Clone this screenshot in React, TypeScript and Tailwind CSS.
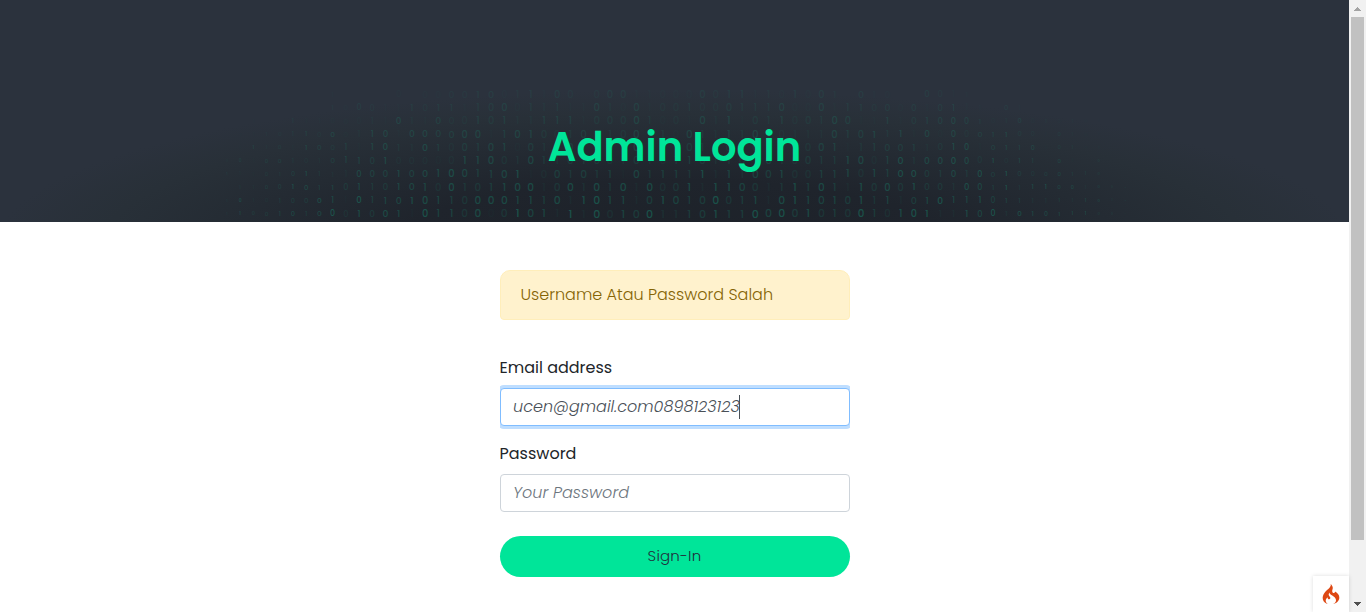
import React from "react";
import { SiCodeigniter } from "react-icons/si";

const BITS: [string, string][] = [
  ["00110101101010100" + "0010011100000011" + "00000111101001101" + "0000011010101010101",
   "00000000100001011" + "2233123132023311" + "11132331213132031" + "1003211000000000000"],
  ["01101011100011101" + "1110001111101001" + "00100011100001110" + "0001011100101010101",
   "00000000213211323" + "3133413231142141" + "22322333341141332" + "3131341103100000000"],
  ["01101111000110110" + "0010111111100001" + "00101110110010011" + "1101000101001010101",
   "00100311111215214" + "2243422444133353" + "12152513342335411" + "4134454312412121100"],
  ["01110110001101000" + "0001101001011001" + "10011110101110101" + "1110000011001010101",
   "01122342512551554" + "4551455323423352" + "31532535222225445" + "3515152445321321100"],
  ["01110110011101101" + "0010100100110101" + "01011010101001111" + "0011010101101010101",
   "01523154341563264" + "2445514324334353" + "33433333331355134" + "4442366145451331200"],
  ["00100101011010000" + "0110010110100101" + "01101101010011100" + "1010000010110010001",
   "24144322455462221" + "2666336434443343" + "24543434543444662" + "5736676362540510400"],
  ["11101011110001001" + "0011011001011101" + "11111110010011101" + "1000101001000011001",
   "42133463226556566" + "7655671254545164" + "55472636563355636" + "5774464747434544400"],
  ["01100101101101010" + "0101100100101010" + "00111100111101110" + "0010010011111001000",
   "03244764546446663" + "7445677247374727" + "34727764247575274" + "7474437647367563544"],
  ["10101000110110101" + "1000011101101110" + "10100011101101011" + "1101011101111111010",
   "37224447618566776" + "5477766572786625" + "76558456277666574" + "6256866755433436644"],
  ["11001010001001101" + "1000010111100100" + "11101110000101001" + "0101111001010111001",
   "37445646837476186" + "6471486628283658" + "33557558685745485" + "3788227683766667443"],
];

function BinaryPattern() {
  return (
    <svg className="absolute inset-0" width="1349" height="222" viewBox="0 0 1349 222" aria-hidden="true">
      <g fill="#14a884" fontFamily="Poppins, Inter, sans-serif" fontWeight="500" textAnchor="middle">
        {BITS.map(([digits, levels], r) =>
          digits.split("").map((d, c) => {
            const level = Number(levels[c]);
            if (!level) return null;
            const edge = 1 - Math.pow(Math.abs(c - 33) / 38, 3);
            const size = (10 + r * 0.12) * edge;
            return (
              <text
                key={r + "-" + c}
                x={226.9 + c * 13.21}
                y={94.4 + r * 13.25 + size * 0.35}
                fontSize={size}
                opacity={level * 0.026 + level * level * 0.002}
              >
                {d}
              </text>
            );
          }),
        )}
      </g>
    </svg>
  );
}

function Header() {
  return (
    <header className="relative h-[222px] bg-[#2b323d] bg-[radial-gradient(ellipse_675px_150px_at_50%_108%,#1d2229_0%,#1f242c_40%,#242b33_65%,#283038_84%,#2b323d_100%)] pt-[117px] text-center">
      <BinaryPattern />
      <h1 className="relative font-[Poppins,Inter,sans-serif] text-[40px] leading-[60px] font-semibold text-[#00e599]">
        Admin Login
      </h1>
    </header>
  );
}

function Scrollbar() {
  return (
    <div className="flex w-[17px] flex-col items-center justify-between bg-[#f1f1f1]">
      <div className="flex h-[17px] w-full items-center justify-center">
        <svg width="7" height="4" viewBox="0 0 7 4" shapeRendering="crispEdges"><path d="M3 0h1v1h1v1h1v1h1v1H0V3h1V2h1V1h1z" fill="#a3a3a3" /></svg>
      </div>
      <div className="mb-auto h-[523px] w-[13px] bg-[#c1c1c1]" />
      <div className="flex h-[17px] w-full items-center justify-center">
        <svg width="7" height="4" viewBox="0 0 7 4" shapeRendering="crispEdges"><path d="M0 0h7v1H6v1H5v1H4v1H3V3H2V2H1V1H0z" fill="#505050" /></svg>
      </div>
    </div>
  );
}

function DebugBadge() {
  return (
    <div className="absolute right-[17px] bottom-0 flex h-9 w-9 items-center justify-center bg-white shadow-[0_0_4px_rgba(0,0,0,0.14)]">
      <SiCodeigniter className="h-5 w-5 text-[#dd4814]" />
    </div>
  );
}

export default function App() {
  return (
    <div className="relative flex h-[612px] w-[1366px] overflow-hidden bg-white font-[Poppins,Inter,sans-serif] text-base text-[#212529]">
      <div className="flex-1">
        <Header />
        <main className="mx-auto mt-12 w-[350px]">
          <div className="flex h-[50px] items-center rounded-t-[10px] rounded-b-[4px] border border-[#ffeeba] bg-[#fff2cd] px-5 font-light text-[#856404]">
            <span>Username Atau Password Salah</span>
          </div>
          <form className="mt-9" onSubmit={(e) => e.preventDefault()}>
            <label className="block h-[29px] leading-6">
              <span>Email address</span>
            </label>
            <div className="overflow-hidden py-[3px]">
              <div className="flex h-[38px] items-center rounded-[4px] border border-[#80bdff] bg-white px-[12.5px] font-light text-[#495057] italic shadow-[0_0_0_3px_#bfdeff]">
                <span>ucen@gmail.com0898123123</span>
                <span className="-ml-[0.8px] h-6 w-px bg-[#495057]" />
              </div>
            </div>
            <label className="mt-[13px] block h-8 leading-6">
              <span>Password</span>
            </label>
            <div className="flex h-[38px] items-center rounded-[4px] border border-[#ced4da] bg-white px-[12.5px] font-light text-[#6c757d] italic">
              <span>Your Password</span>
            </div>
            <button className="mt-6 h-[41px] w-full rounded-full bg-[#00e599] text-[15px] font-light text-[#212f3c]">
              <span className="tracking-[0.2px]">Sign-In</span>
            </button>
          </form>
        </main>
      </div>
      <Scrollbar />
      <DebugBadge />
    </div>
  );
}
